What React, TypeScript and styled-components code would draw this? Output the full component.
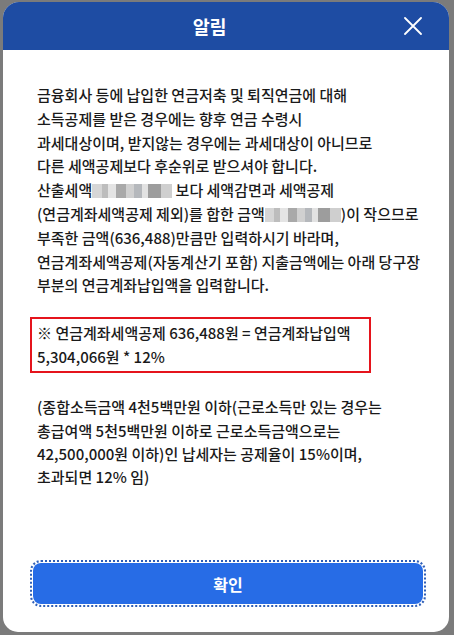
import React from 'react';
import styled, { createGlobalStyle } from 'styled-components';

const GlobalStyle = createGlobalStyle`
  html, body {
    margin: 0;
    padding: 0;
    background: #7b7b7b;
  }
  body {
    font-family: "Noto Sans CJK KR", "Noto Sans", "Liberation Sans", sans-serif;
  }
`;

const Overlay = styled.div`
  width: 454px;
  height: 635px;
  padding: 2px 0 0 3px;
  box-sizing: border-box;
  background: #7b7b7b;
`;

const Modal = styled.div`
  width: 446px;
  height: 630px;
  background: #ffffff;
  border-radius: 16px 16px 15px 15px;
  display: flex;
  flex-direction: column;
  overflow: hidden;
`;

const Header = styled.div`
  height: 48px;
  flex-shrink: 0;
  background: #1e4ca3;
  display: flex;
  align-items: center;
  padding: 0 19px 0 20px;
`;

const Title = styled.h1`
  flex: 1;
  margin: 0;
  text-align: center;
  color: #ffffff;
  font-size: 18.5px;
  font-weight: 700;
  letter-spacing: -0.2px;
`;

const CloseButton = styled.button`
  width: 34px;
  height: 34px;
  border: 0;
  padding: 0;
  background: transparent;
  display: flex;
  align-items: center;
  justify-content: center;
  cursor: pointer;
`;

const Body = styled.div`
  padding: 33px 27px 0 27px;
  color: #1a1a1a;
  font-size: 15px;
  font-weight: 500;
`;

const Paragraph = styled.p<{ $gap?: number; $lh?: number }>`
  margin: ${(p) => p.$gap ?? 0}px 0 0 0;
  padding: 0 7px;
  line-height: ${(p) => p.$lh ?? 23.8}px;
  white-space: nowrap;
`;

const Notice = styled.div`
  display: inline-block;
  margin-top: 20px;
  border: 2px solid #e5141c;
  padding: 2px 18px 2px 5px;
  line-height: 24px;
  white-space: nowrap;
`;

const Masked = styled.span<{ $w: number }>`
  display: inline-block;
  width: ${(p) => p.$w}px;
  height: 14px;
  vertical-align: -2px;
  background:
    linear-gradient(90deg,
      #d6d6d6 0 12%, #bdbdbd 12% 20%, #e4e4e4 20% 30%,
      #a9a9a9 30% 42%, #d0d0d0 42% 52%, #b5b8bc 52% 62%,
      #e2e2e2 62% 70%, #9d9d9d 70% 86%, #cfcfcf 86% 100%);
  filter: blur(0.6px);
`;

const Footer = styled.div`
  margin-top: auto;
  padding: 0 26px 28px 30px;
`;

const ConfirmButton = styled.button`
  width: 100%;
  height: 41px;
  border: 0;
  border-radius: 8px;
  background: #276ce6;
  color: #ffffff;
  font-family: inherit;
  font-size: 16px;
  font-weight: 700;
  outline: 2px dotted #2f5fb8;
  outline-offset: 1px;
  cursor: pointer;
`;

const CloseIcon = () => (
  <svg width="18" height="18" viewBox="0 0 18 18" fill="none">
    <path d="M1 1 L17 17 M17 1 L1 17" stroke="#ffffff" strokeWidth="1.8" strokeLinecap="round" />
  </svg>
);

export default function App() {
  return (
    <>
      <GlobalStyle />
      <Overlay>
        <Modal>
          <Header>
            <Title>알림</Title>
            <CloseButton aria-label="닫기">
              <CloseIcon />
            </CloseButton>
          </Header>
          <Body>
            <Paragraph>
              금융회사 등에 납입한 연금저축 및 퇴직연금에 대해
              <br />
              소득공제를 받은 경우에는 향후 연금 수령시
              <br />
              과세대상이며, 받지않는 경우에는 과세대상이 아니므로
              <br />
              다른 세액공제보다 후순위로 받으셔야 합니다.
              <br />
              산출세액<Masked $w={80} /> 보다 세액감면과 세액공제
              <br />
              (연금계좌세액공제 제외)를 합한 금액<Masked $w={76} />)이 작으므로
              <br />
              부족한 금액(636,488)만큼만 입력하시기 바라며,
              <br />
              연금계좌세액공제(자동계산기 포함) 지출금액에는 아래 당구장
              <br />
              부분의 연금계좌납입액을 입력합니다.
            </Paragraph>
            <Notice>
              ※ 연금계좌세액공제 636,488원 = 연금계좌납입액
              <br />
              5,304,066원 * 12%
            </Notice>
            <Paragraph $gap={22} $lh={23.4}>
              (종합소득금액 4천5백만원 이하(근로소득만 있는 경우는
              <br />
              총급여액 5천5백만원 이하로 근로소득금액으로는
              <br />
              42,500,000원 이하)인 납세자는 공제율이 15%이며,
              <br />
              초과되면 12% 임)
            </Paragraph>
          </Body>
          <Footer>
            <ConfirmButton>확인</ConfirmButton>
          </Footer>
        </Modal>
      </Overlay>
    </>
  );
}
